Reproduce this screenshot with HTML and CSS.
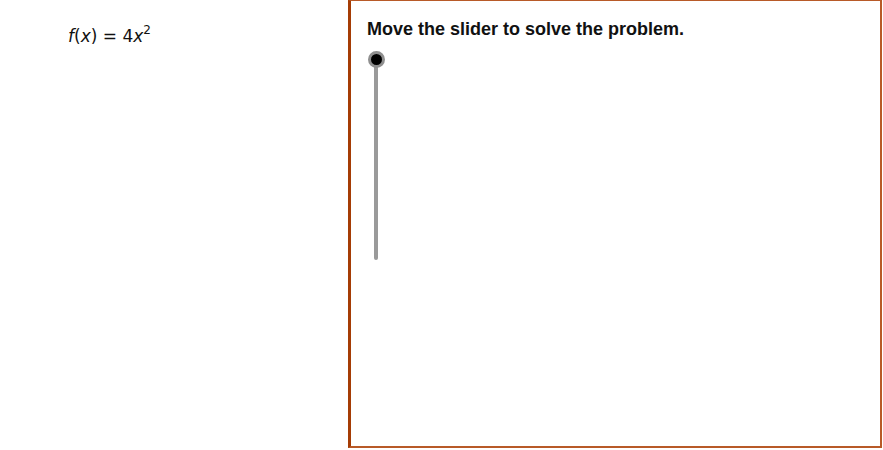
FILE: index.html
```html
<!DOCTYPE html>
<html>
<head>
<meta charset="utf-8">
<link rel="stylesheet" href="styles.css">
</head>
<body>
<div class="page">
  <div class="left">
    <div class="formula"><i>f</i>(<i>x</i>) = 4<i>x</i><sup>2</sup></div>
  </div>
  <div class="panel">
    <div class="prompt">Move the slider to solve the problem.</div>
    <div class="slider">
      <div class="track"></div>
      <div class="thumb"></div>
    </div>
  </div>
</div>
</body>
</html>
```
FILE: styles.css
```css
html, body {
  margin: 0;
  padding: 0;
  background: #fff;
}
.page {
  display: flex;
  width: 883px;
  height: 450px;
}
.left {
  width: 348px;
  flex: none;
  padding: 25px 0 0 68px;
  box-sizing: border-box;
}
.formula {
  font-family: "DejaVu Sans", sans-serif;
  font-size: 17px;
  line-height: 22px;
  color: #111;
}
.formula i {
  font-style: italic;
}
.formula sup {
  font-size: 12px;
  vertical-align: 8px;
  line-height: 0;
}
.panel {
  width: 534px;
  height: 448px;
  flex: none;
  border-left: 3px solid #a53c05;
  border-top: 1px solid #b85a28;
  border-right: 2px solid #b85a28;
  border-bottom: 2px solid #b85a28;
  box-sizing: border-box;
  padding: 17px 0 0 16px;
}
.prompt {
  font-family: "Liberation Sans", Arial, sans-serif;
  font-weight: bold;
  font-size: 18px;
  color: #111;
  line-height: 22px;
}
.slider {
  position: relative;
  width: 20px;
  height: 214px;
  margin-top: 7px;
}
.track {
  position: absolute;
  left: 7px;
  top: 13px;
  width: 4px;
  height: 200px;
  background: #9a9a9a;
  border-radius: 2px;
}
.thumb {
  position: absolute;
  left: 1px;
  top: 4px;
  width: 11px;
  height: 11px;
  background: #000;
  border: 3px solid #8f8f8f;
  border-radius: 50%;
}
```
